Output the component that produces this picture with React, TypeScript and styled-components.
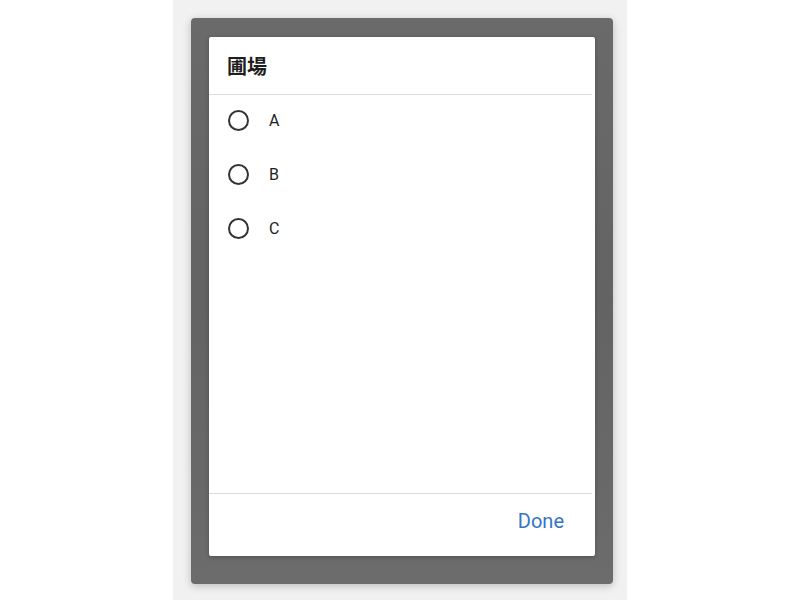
import styled, { createGlobalStyle } from 'styled-components';

const GlobalStyle = createGlobalStyle`
  html, body {
    margin: 0;
    padding: 0;
    background: #ffffff;
  }
  body {
    font-family: Roboto, 'Noto Sans CJK JP', sans-serif;
  }
`;

const Page = styled.div`
  width: 800px;
  height: 600px;
  display: flex;
  justify-content: center;
`;

const Screen = styled.div`
  width: 454px;
  height: 600px;
  box-sizing: border-box;
  background: #f1f1f1;
  padding: 18px 14px 16px 18px;
  display: flex;
`;

const Scrim = styled.div`
  flex: 1;
  background: linear-gradient(180deg, #6a6a6a 0%, #636363 50%, #6c6c6c 100%);
  border-radius: 4px;
  box-shadow: 0 2px 8px rgba(0, 0, 0, 0.22);
  padding: 19px 18px 28px 18px;
  display: flex;
`;

const Dialog = styled.div`
  flex: 1;
  background: #ffffff;
  border-radius: 2px;
  box-shadow: 0 1px 4px rgba(0, 0, 0, 0.25);
  display: flex;
  flex-direction: column;
`;

const Header = styled.div`
  height: 57px;
  display: flex;
  align-items: center;
  padding-left: 18px;
  padding-bottom: 1px;
  box-sizing: border-box;
  font-family: 'Noto Sans CJK JP', sans-serif;
  font-weight: 700;
  font-size: 20px;
  color: #1e1e1e;
`;

const Divider = styled.div`
  height: 1px;
  background: #dcdcdc;
  margin-right: 3px;
`;

const List = styled.ul`
  flex: 1;
  list-style: none;
  margin: 0;
  padding: 0;
`;

const Row = styled.li`
  height: 54px;
  box-sizing: border-box;
  display: flex;
  align-items: center;
  padding-left: 19px;
  padding-bottom: 4px;
`;

const Radio = styled.span`
  width: 21px;
  height: 21px;
  box-sizing: border-box;
  border: 2px solid #333333;
  border-radius: 50%;
  margin-right: 20px;
`;

const Label = styled.span`
  font-family: Roboto, sans-serif;
  font-size: 16px;
  color: #1e1e1e;
`;

const Footer = styled.div`
  height: 62px;
  display: flex;
  align-items: center;
  justify-content: flex-end;
  padding-right: 31px;
  padding-bottom: 8px;
  box-sizing: border-box;
`;

const DoneButton = styled.button`
  border: none;
  background: none;
  padding: 0;
  font-family: Roboto, sans-serif;
  font-size: 20px;
  color: #3574c7;
  cursor: pointer;
`;

const options = ['A', 'B', 'C'];

const App = () => (
  <>
    <GlobalStyle />
    <Page>
      <Screen>
        <Scrim>
          <Dialog>
            <Header>圃場</Header>
            <Divider />
            <List>
              {options.map((o) => (
                <Row key={o}>
                  <Radio />
                  <Label>{o}</Label>
                </Row>
              ))}
            </List>
            <Divider />
            <Footer>
              <DoneButton>Done</DoneButton>
            </Footer>
          </Dialog>
        </Scrim>
      </Screen>
    </Page>
  </>
);

export default App;
